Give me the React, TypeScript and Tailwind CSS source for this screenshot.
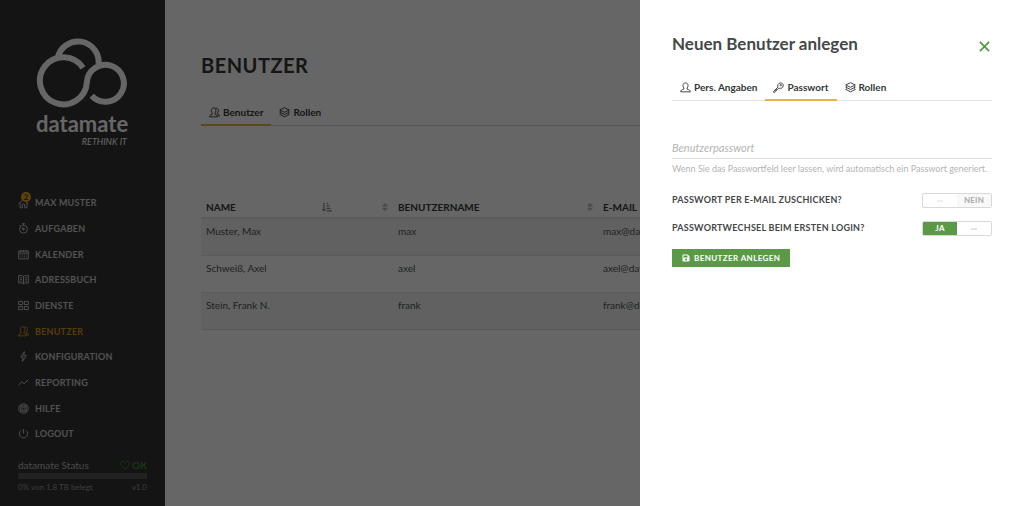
import { useState, type ReactNode } from "react";
import clsx from "clsx";
import { FaSave, FaSort, FaSortAmountDownAlt } from "react-icons/fa";

type IconName =
  | "home"
  | "timer"
  | "calendar"
  | "book"
  | "grid"
  | "users"
  | "user"
  | "bolt"
  | "chart"
  | "help"
  | "power"
  | "layers"
  | "key"
  | "heart"
  | "close";

const ICONS: Record<IconName, ReactNode> = {
  home: <path d="M1.5 12.5 12 3l10.5 9.500M4.500 10.500V21.500H9.500V15a2.500 2.500 0 0 1 5 0v6.500h5V10.500" />,
  timer: (
    <>
      <circle cx="12" cy="13.500" r="8.500" />
      <path d="M9 1.500h6M12 1.500V5M5.500 7.500 3 5M12 13.500 9.500 9.500M12 13.500h1.500" />
      <circle cx="12" cy="13.500" r="2" />
    </>
  ),
  calendar: (
    <>
      <path d="M1.500 4.500h21v17h-21zM1.500 9h21M6.500 2v4.500M17.500 2v4.500M12 2v4.500" />
      <path d="M5.500 13h2M9.500 13h2M13 13h2M17 13h2M5.500 17h2M9.500 17h2M13 17h2M17 17h2" />
    </>
  ),
  book: (
    <path d="M12 5c-3-2-6-2-10.500-2v16.500c4.500 0 7.500 0 10.500 2 3-2 6-2 10.500-2V3C18 3 15 3 12 5zM12 5v16.500M4.500 7.500c2 0 3 0 4.500.700M4.500 11.500c2 0 3 0 4.500.700M4.500 15.500c2 0 3 0 4.500.700M19.500 7.500c-2 0-3 0-4.500.700M19.500 11.500c-2 0-3 0-4.500.700M19.500 15.500c-2 0-3 0-4.500.700" />
  ),
  grid: <path d="M1.500 3h8.500v7H1.500zM14 3h8.500v7H14zM1.500 14h8.500v7H1.500zM14 14h8.500v7H14z" />,
  users: (
    <>
      <path d="M1 21.500c0-3.500 2-4 6-5.500v-2.500C5.500 11.500 5 9.500 5 7.500 5 4 7 2 10 2s5 2 5 5.500c0 2-.5 4-2 6V16c4 1.500 5.500 2 5.500 5.500z" />
      <path d="M14 3c4-1.500 6.500 1 6.500 4.500 0 2-1 4-2.500 5.500v2c3.500 1 5 1.500 5 4.500h-4" />
    </>
  ),
  user: (
    <path d="M1.500 21.500c0-4 2.500-4.500 7-6v-2.500C7 11.500 6.500 9.500 6.500 7.500 6.500 4 8.500 2 12 2s5.500 2 5.500 5.500c0 2-.5 4-2 5.500v2.500c4.500 1.500 7 2 7 6z" />
  ),
  bolt: <path d="M14 1.500 6 13h5L9.500 22.500 18 10.500h-5.500z" />,
  chart: <path d="M1.500 18 8 10.500l5.500 4L22.500 6" />,
  help: (
    <>
      <circle cx="12" cy="12" r="10.500" />
      <circle cx="12" cy="12" r="7" />
      <circle cx="12" cy="12" r="3.500" />
      <path d="m5 5 4.500 4.500M19 5l-4.500 4.500M5 19l4.500-4.500M19 19l-4.500-4.500" />
    </>
  ),
  power: <path d="M12 2v10M7 5a9 9 0 1 0 10 0" />,
  layers: (
    <path d="M12 1.500 22.500 6.500 12 11.500 1.500 6.500zM4 9.500l-2.500 1.500L12 16.500 22.500 11 20 9.500M4 14l-2.500 2L12 21.500 22.500 16 20 14" />
  ),
  key: (
    <>
      <path d="M10.500 11.500c-1.500-4 1-9.500 6-9.500 3.500 0 6 2.500 6 5.500 0 5-5 7.500-9.500 6L10.500 16H8v2.500H5.500V21L4 22.500H1.500V20z" />
      <circle cx="17" cy="7" r="1.500" />
    </>
  ),
  heart: <path d="M12 21.500C5 16 1.500 12.500 1.500 8.500 1.500 2.500 9.500 1 12 6.500 14.500 1 22.500 2.500 22.500 8.500c0 4-3.500 7.500-10.500 13z" />,
  close: <path strokeWidth="3.500" d="m2 2 20 20M22 2 2 22" />
};

function Icon({ name, className = "size-[11px]" }: { name: IconName; className?: string }) {
  return (
    <svg
      viewBox="0 0 24 24"
      className={clsx("shrink-0", className)}
      fill="none"
      stroke="currentColor"
      strokeWidth="2"
      aria-hidden="true"
    >
      {ICONS[name]}
    </svg>
  );
}

const MENU: { label: string; icon: IconName; badge?: number; active?: boolean }[] = [
  { label: "Max Muster", icon: "home", badge: 2 },
  { label: "Aufgaben", icon: "timer" },
  { label: "Kalender", icon: "calendar" },
  { label: "Adressbuch", icon: "book" },
  { label: "Dienste", icon: "grid" },
  { label: "Benutzer", icon: "users", active: true },
  { label: "Konfiguration", icon: "bolt" },
  { label: "Reporting", icon: "chart" },
  { label: "Hilfe", icon: "help" },
  { label: "Logout", icon: "power" }
];

const USERS = [
  { name: "Muster, Max", login: "max", email: "max@data.de" },
  { name: "Schweiß, Axel", login: "axel", email: "axel@data.de" },
  { name: "Stein, Frank N.", login: "frank", email: "frank@data.de" }
];

function Logo() {
  return (
    <div className="ml-[18px] w-[92px] text-white">
      <svg viewBox="36 38 92 70" className="block h-[70px] w-full" fill="none" stroke="currentColor" strokeWidth="6" aria-hidden="true">
        <path d="M57.700 58A20.700 20.700 0 0 1 98.600 64" />
        <path d="M91.700 95.800A18.500 18.500 0 1 0 86.900 82A23.500 23.500 0 1 1 83 67.800" />
      </svg>
      <p className="mt-1 text-center text-[22px] leading-6 font-bold">datamate</p>
      <p className="pr-px text-right text-[9px] leading-3 italic">RETHINK IT</p>
    </div>
  );
}

function Sidebar() {
  return (
    <aside className="flex w-[165px] shrink-0 flex-col bg-[#333333] px-[18px] pt-[38px] pb-3">
      <Logo />
      <nav className="mt-[43px]">
        <ul className="flex h-[255px] flex-col justify-between">
          {MENU.map((item) => (
            <li key={item.label}>
              <a
                href="#"
                className={clsx(
                  "flex h-6 items-center gap-1.5 text-[9px] font-bold tracking-wide uppercase",
                  item.active ? "text-[#d9961a]" : "text-[#cccccc]"
                )}
              >
                <span className="relative">
                  <Icon name={item.icon} />
                  {item.badge ? (
                    <span className="absolute -top-1.5 left-[3px] flex size-2.5 items-center justify-center rounded-full bg-[#f0a81e] text-[8px] tracking-normal text-[#333333]">
                      {item.badge}
                    </span>
                  ) : null}
                </span>
                {item.label}
              </a>
            </li>
          ))}
        </ul>
      </nav>
      <div className="mt-3 text-[#999999]">
        <div className="flex items-center justify-between text-[10px] leading-[14px]">
          <span className="text-[#bbbbbb]">datamate Status</span>
          <span className="flex items-center gap-0.5 font-bold text-[#458a35]">
            <Icon name="heart" className="size-2.5" />
            OK
          </span>
        </div>
        <div className="mt-px h-1.5 bg-[#555555]" />
        <div className="mt-0.5 flex justify-between text-[8px] leading-3">
          <span>0% von 1.8 TB belegt</span>
          <span>v1.0</span>
        </div>
      </div>
    </aside>
  );
}

function Tab({ icon, label, active, onClick }: { icon: IconName; label: string; active: boolean; onClick?: () => void }) {
  return (
    <button
      type="button"
      role="tab"
      aria-selected={active}
      onClick={onClick}
      className={clsx(
        "-mb-px flex h-[26px] items-center gap-[3px] border-b-2 px-2 text-[10px] font-bold text-[#333838]",
        active ? "border-[#eab148]" : "border-transparent"
      )}
    >
      <Icon name={icon} />
      {label}
    </button>
  );
}

function UserTable() {
  return (
    <table className="mt-[73px] w-full table-fixed border-collapse text-left text-[10px] leading-4 text-[#333838]">
      <thead>
        <tr className="border-b-2 border-[#e4e4e4] uppercase">
          <th className="w-[192px] px-[5px] pb-0.5">
            <span className="flex items-center justify-between">
              Name
              <FaSortAmountDownAlt className="mr-14 size-2.5 text-[#888888]" aria-hidden="true" />
            </span>
          </th>
          <th className="w-[205px] px-[5px] pb-0.5">
            <span className="flex items-center">
              <FaSort className="-ml-[18px] size-2.5 text-[#bbbbbb]" aria-hidden="true" />
              <span className="ml-2">Benutzername</span>
            </span>
          </th>
          <th className="px-[5px] pb-0.5">
            <span className="flex items-center">
              <FaSort className="-ml-[18px] size-2.5 text-[#bbbbbb]" aria-hidden="true" />
              <span className="ml-2">E-Mail</span>
            </span>
          </th>
        </tr>
      </thead>
      <tbody className="text-[#505555]">
        {USERS.map((user) => (
          <tr key={user.login} className="h-[37px] border-b border-[#e0e0e0] align-top odd:bg-[#f2f2f2]">
            <td className="px-[5px] pt-1">{user.name}</td>
            <td className="px-[5px] pt-1">{user.login}</td>
            <td className="px-[5px] pt-1">{user.email}</td>
          </tr>
        ))}
      </tbody>
    </table>
  );
}

function Toggle({ id, label, defaultChecked = false }: { id: string; label: string; defaultChecked?: boolean }) {
  const [on, setOn] = useState(defaultChecked);

  return (
    <div className="flex items-center justify-between">
      <label htmlFor={id} className="text-[9px] leading-[15px] font-bold tracking-wide text-[#444848] uppercase">
        {label}
      </label>
      <label className="mt-0.5 flex h-[15px] w-[70px] overflow-hidden rounded-xs border border-[#d8d8d8] text-[8px] leading-[13px] font-bold tracking-wide">
        <input id={id} type="checkbox" role="switch" className="sr-only" checked={on} onChange={() => setOn(!on)} />
        <span className={clsx("flex flex-1 items-center justify-center", on && "bg-[#5a9a47] text-white")}>
          {on ? "JA" : <span className="h-0.5 w-1.5 bg-[#eeeeee]" />}
        </span>
        <span className={clsx("flex flex-1 items-center justify-center", !on && "bg-[#f8f8f8] text-[#aaaaaa]")}>
          {on ? <span className="h-0.5 w-1.5 bg-[#e4e4e4]" /> : "NEIN"}
        </span>
      </label>
    </div>
  );
}

const DRAWER_TABS: { label: string; icon: IconName }[] = [
  { label: "Pers. Angaben", icon: "user" },
  { label: "Passwort", icon: "key" },
  { label: "Rollen", icon: "layers" }
];

function CreateUserDrawer() {
  const [tab, setTab] = useState("Passwort");

  return (
    <section
      role="dialog"
      aria-labelledby="drawer-title"
      className="fixed inset-y-0 right-0 w-[37.5%] bg-white px-8 pt-8 text-[#333838]"
    >
      <header className="flex items-start justify-between">
        <h2 id="drawer-title" className="text-[17px] leading-6 font-bold text-[#444848]">
          Neuen Benutzer anlegen
        </h2>
        <button type="button" aria-label="Schließen" className="mt-[9px] mr-0.5 text-[#4f9640]">
          <Icon name="close" />
        </button>
      </header>
      <div role="tablist" className="mt-[19px] flex border-b border-[#e4e4e4]">
        {DRAWER_TABS.map((item) => (
          <Tab key={item.label} {...item} active={tab === item.label} onClick={() => setTab(item.label)} />
        ))}
      </div>
      <form className="mt-9" onSubmit={(event) => event.preventDefault()}>
        <input
          type="password"
          aria-label="Benutzerpasswort"
          placeholder="Benutzerpasswort"
          className="block h-[22px] w-full border-b border-[#e0e0e0] text-[11px] outline-none placeholder:text-[#b4b4b4] placeholder:italic"
        />
        <p className="mt-1 text-[9px] leading-3 text-[#b4b4b4]">
          Wenn Sie das Passwortfeld leer lassen, wird automatisch ein Passwort generiert.
        </p>
        <div className="mt-4 grid gap-[11px]">
          <Toggle id="send-mail" label="Passwort per E-Mail zuschicken?" />
          <Toggle id="change-login" label="Passwortwechsel beim ersten Login?" defaultChecked />
        </div>
        <button
          type="submit"
          className="mt-[13px] flex h-[18px] items-center gap-1 bg-[#5a9a47] px-2.5 text-[8px] font-bold tracking-wider text-white uppercase"
        >
          <FaSave className="size-2" aria-hidden="true" />
          Benutzer anlegen
        </button>
      </form>
    </section>
  );
}

export default function App() {
  return (
    <div className="flex min-h-screen bg-white font-['Lato','Open_Sans',sans-serif]">
      <Sidebar />
      <main className="min-w-0 flex-1 px-9 pt-[53px]">
        <h1 className="text-[20px] leading-6 font-bold tracking-wide text-[#333838] uppercase">Benutzer</h1>
        <div role="tablist" className="mt-[23px] flex border-b border-[#dddddd]">
          <Tab icon="users" label="Benutzer" active />
          <Tab icon="layers" label="Rollen" active={false} />
        </div>
        <UserTable />
      </main>
      <div className="fixed inset-0 bg-black/60" />
      <CreateUserDrawer />
    </div>
  );
}
